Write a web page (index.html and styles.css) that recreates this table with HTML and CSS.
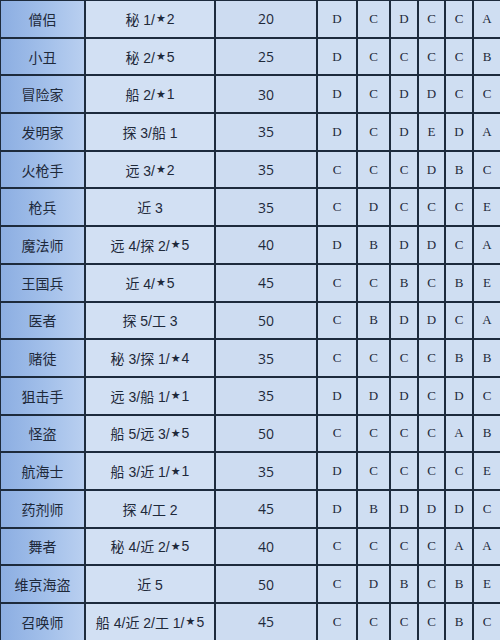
FILE: index.html
```html
<!DOCTYPE html>
<html>
<head>
<meta charset="utf-8">
<link rel="stylesheet" href="styles.css">
</head>
<body>
<div class="table">
  <div class="name">僧侣</div><div class="req">秘 1/<span class="star">★</span>2</div><div class="num">20</div><div class="g">D</div><div class="g">C</div><div class="g">D</div><div class="g">C</div><div class="g">C</div><div class="g">A</div>
  <div class="name">小丑</div><div class="req">秘 2/<span class="star">★</span>5</div><div class="num">25</div><div class="g">D</div><div class="g">C</div><div class="g">C</div><div class="g">C</div><div class="g">C</div><div class="g">B</div>
  <div class="name">冒险家</div><div class="req">船 2/<span class="star">★</span>1</div><div class="num">30</div><div class="g">D</div><div class="g">C</div><div class="g">D</div><div class="g">D</div><div class="g">C</div><div class="g">C</div>
  <div class="name">发明家</div><div class="req">探 3/船 1</div><div class="num">35</div><div class="g">D</div><div class="g">C</div><div class="g">D</div><div class="g">E</div><div class="g">D</div><div class="g">A</div>
  <div class="name">火枪手</div><div class="req">远 3/<span class="star">★</span>2</div><div class="num">35</div><div class="g">C</div><div class="g">C</div><div class="g">C</div><div class="g">D</div><div class="g">B</div><div class="g">C</div>
  <div class="name">枪兵</div><div class="req">近 3</div><div class="num">35</div><div class="g">C</div><div class="g">D</div><div class="g">C</div><div class="g">C</div><div class="g">C</div><div class="g">E</div>
  <div class="name">魔法师</div><div class="req">远 4/探 2/<span class="star">★</span>5</div><div class="num">40</div><div class="g">D</div><div class="g">B</div><div class="g">D</div><div class="g">D</div><div class="g">C</div><div class="g">A</div>
  <div class="name">王国兵</div><div class="req">近 4/<span class="star">★</span>5</div><div class="num">45</div><div class="g">C</div><div class="g">C</div><div class="g">B</div><div class="g">C</div><div class="g">B</div><div class="g">E</div>
  <div class="name">医者</div><div class="req">探 5/工 3</div><div class="num">50</div><div class="g">C</div><div class="g">B</div><div class="g">D</div><div class="g">D</div><div class="g">C</div><div class="g">A</div>
  <div class="name">赌徒</div><div class="req">秘 3/探 1/<span class="star">★</span>4</div><div class="num">35</div><div class="g">C</div><div class="g">C</div><div class="g">C</div><div class="g">C</div><div class="g">B</div><div class="g">B</div>
  <div class="name">狙击手</div><div class="req">远 3/船 1/<span class="star">★</span>1</div><div class="num">35</div><div class="g">D</div><div class="g">D</div><div class="g">D</div><div class="g">C</div><div class="g">D</div><div class="g">C</div>
  <div class="name">怪盗</div><div class="req">船 5/远 3/<span class="star">★</span>5</div><div class="num">50</div><div class="g">C</div><div class="g">C</div><div class="g">C</div><div class="g">C</div><div class="g">A</div><div class="g">B</div>
  <div class="name">航海士</div><div class="req">船 3/近 1/<span class="star">★</span>1</div><div class="num">35</div><div class="g">D</div><div class="g">C</div><div class="g">C</div><div class="g">C</div><div class="g">C</div><div class="g">E</div>
  <div class="name">药剂师</div><div class="req">探 4/工 2</div><div class="num">45</div><div class="g">D</div><div class="g">B</div><div class="g">D</div><div class="g">D</div><div class="g">D</div><div class="g">C</div>
  <div class="name">舞者</div><div class="req">秘 4/近 2/<span class="star">★</span>5</div><div class="num">40</div><div class="g">C</div><div class="g">C</div><div class="g">C</div><div class="g">C</div><div class="g">A</div><div class="g">A</div>
  <div class="name">维京海盗</div><div class="req">近 5</div><div class="num">50</div><div class="g">C</div><div class="g">D</div><div class="g">B</div><div class="g">C</div><div class="g">B</div><div class="g">E</div>
  <div class="name">召唤师</div><div class="req">船 4/近 2/工 1/<span class="star">★</span>5</div><div class="num">45</div><div class="g">C</div><div class="g">C</div><div class="g">C</div><div class="g">C</div><div class="g">B</div><div class="g">C</div>
</div>
</body>
</html>
```

FILE: styles.css
```css
html, body {
  margin: 0;
  padding: 0;
  background: #cfdcf0;
}
.table {
  display: grid;
  grid-template-columns: 83px 128px 100px 38px 31px 26px 25px 26px 26px;
  grid-template-rows: repeat(17, 35.7px);
  gap: 2px;
  padding: 1px 0 0 1px;
  background: #1d2b3d;
  width: 500px;
  height: 640px;
  box-sizing: border-box;
  overflow: hidden;
  color: #1e293a;
}
.table > div {
  display: flex;
  align-items: center;
  justify-content: center;
  background: #cfdef2;
}
.name {
  background: linear-gradient(to right, #8caee2 0%, #a3c0ea 55%, #b9cff0 100%) !important;
  font-family: "Noto Sans CJK SC", sans-serif;
  font-size: 14px;
}
.req {
  font-family: "Liberation Sans", "Noto Sans CJK SC", sans-serif;
  font-size: 14px;
  background: #d2e0f3 !important;
}
.star {
  font-family: "DejaVu Sans", sans-serif;
  font-size: 11px;
  margin: 0 1px;
}
.num {
  font-family: "Open Sans", sans-serif;
  font-size: 14px;
  background: #cddcf1 !important;
}
.g {
  font-family: "Liberation Serif", serif;
  font-size: 13px;
}
```
